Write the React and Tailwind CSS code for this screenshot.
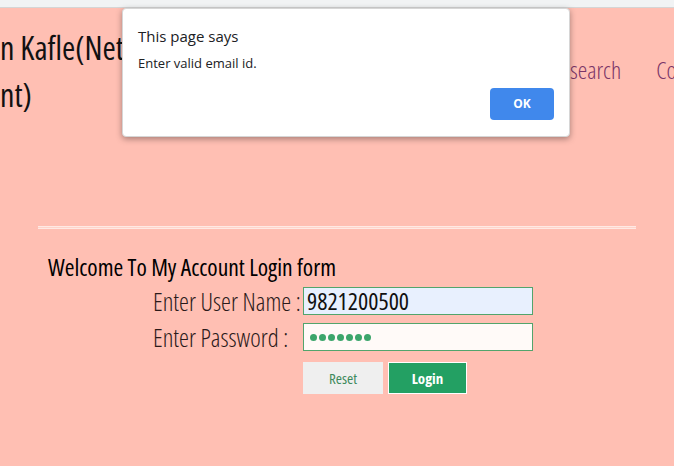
import React from 'react';

const COND = "font-['Open_Sans',sans-serif] [font-stretch:75%]";

function Dialog() {
  return (
    <div className="absolute left-[122px] top-[8px] h-[129px] w-[448px] rounded-[4px] border border-[#d6d6d6] bg-white shadow-[0_2px_6px_rgba(0,0,0,0.35)] font-['Open_Sans',sans-serif]">
      <div className="pl-[15px] pt-[16px] text-[15px] leading-[22px] text-[#202124] [font-stretch:90%]">This page says</div>
      <div className="pl-[15px] pt-[7px] text-[13px] leading-[18px] text-[#202124] [font-stretch:90%]">Enter valid email id.</div>
      <div className="flex justify-end pr-[15px] pt-[16px]">
        <button className="h-[32px] w-[64px] rounded-[4px] bg-[#4088ec] text-[12px] font-bold text-white">OK</button>
      </div>
    </div>
  );
}

export default function App() {
  return (
    <div className="relative h-[466px] w-[674px] overflow-hidden bg-[#ffbfb3]">
      <div className="h-[8px] border-b border-[#d5d5d5] bg-[#f1f3f4]" />

      <header className="flex items-start">
        <h1 className={`${COND} w-[300px] shrink-0 pt-[16px] text-[32px] font-normal leading-[47px] text-[#111]`}>
          n Kafle(Network
          <br />
          nt)
        </h1>
        <nav className={`${COND} ml-[270px] flex shrink-0 gap-[35px] pt-[47px] text-[24px] font-light leading-[30px] text-[#7a3568]`}>
          <span>search</span>
          <span>Contact</span>
        </nav>
      </header>

      <div className="mx-[38px] mt-[108px] h-[3px] border-t border-b border-[#ffe9e4] bg-[#ffd4cb]" />

      <section className="pl-[48px] pt-[23px]">
        <h2 className={`${COND} text-[23.5px] font-normal leading-[30px] text-black`}>Welcome To My Account Login form</h2>
        <div className="ml-[105px] mt-[5px] flex flex-col">
          <div className="flex items-center">
            <label className={`${COND} w-[150px] text-[25px] font-light leading-[28px] text-[#2b1a1a]`}>Enter User Name :</label>
            <div className={`${COND} flex h-[28px] w-[230px] items-center border border-[#52a46c] bg-[#e8f0fe] pl-[3px] text-[24px] leading-[26px] text-[#111]`}>9821200500</div>
          </div>
          <div className="mt-[8px] flex items-center">
            <label className={`${COND} w-[150px] text-[25px] font-light leading-[28px] text-[#2b1a1a]`}>Enter Password :</label>
            <div className="flex h-[28px] w-[230px] items-center gap-[2px] border border-[#52a46c] bg-[#fffaf8] pl-[6px]">
              {[0, 1, 2, 3, 4, 5, 6].map((i) => (
                <span key={i} className="h-[7px] w-[7px] rounded-full bg-[#3ca56b]" />
              ))}
            </div>
          </div>
          <div className="ml-[150px] mt-[11px] flex gap-[5px]">
            <button className={`${COND} h-[32px] w-[80px] bg-[#efefef] text-[15px] leading-[32px] text-[#3e8a5c]`}>Reset</button>
            <button className={`${COND} h-[32px] w-[79px] border border-white bg-[#23a063] text-[15px] font-bold leading-[30px] text-white`}>Login</button>
          </div>
        </div>
      </section>

      <Dialog />
    </div>
  );
}
